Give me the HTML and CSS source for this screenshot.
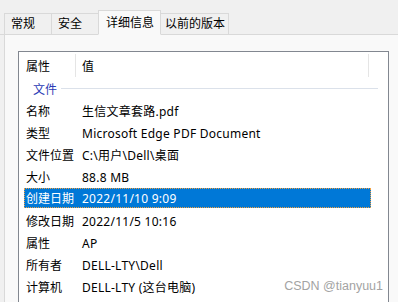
FILE: index.html
```html
<!DOCTYPE html>
<html lang="zh-CN">
<head>
    <meta charset="UTF-8">
    <title>详细信息</title>
    <link rel="stylesheet" href="styles.css">
</head>
<body>
    <div class="tabs">
        <div class="tab">常规</div>
        <div class="tab">安全</div>
        <div class="tab active">详细信息</div>
        <div class="tab">以前的版本</div>
    </div>

    <div class="panel">
        <div class="listbox">
            <div class="header">
                <div class="hcell name-col">属性</div>
                <div class="hcell value-col">值</div>
                <div class="hcell rest"></div>
            </div>

            <div class="group">
                <span class="group-title">文件</span>
                <span class="group-line"></span>
            </div>

            <div class="row"><span class="label">名称</span><span class="value">生信文章套路.pdf</span></div>
            <div class="row"><span class="label">类型</span><span class="value">Microsoft Edge PDF Document</span></div>
            <div class="row"><span class="label">文件位置</span><span class="value">C:\用户\Dell\桌面</span></div>
            <div class="row"><span class="label">大小</span><span class="value">88.8 MB</span></div>
            <div class="row selected"><span class="label">创建日期</span><span class="value">2022/11/10 9:09</span></div>
            <div class="row"><span class="label">修改日期</span><span class="value">2022/11/5 10:16</span></div>
            <div class="row"><span class="label">属性</span><span class="value">AP</span></div>
            <div class="row"><span class="label">所有者</span><span class="value">DELL-LTY\Dell</span></div>
            <div class="row"><span class="label">计算机</span><span class="value">DELL-LTY (这台电脑)</span></div>
        </div>
    </div>

    <div class="watermark">CSDN @tianyuu1</div>
</body>
</html>
```

FILE: styles.css
```css
/* Properties dialog, details tab */
* {
    box-sizing: border-box;
    margin: 0;
    padding: 0;
}

body {
    width: 398px;
    height: 302px;
    overflow: hidden;
    background-color: #f0f0f0;
    font-family: 'Noto Sans', 'Noto Sans CJK SC', sans-serif;
    font-size: 12px;
    color: #000;
    position: relative;
}

/* Tab strip */
.tabs {
    display: flex;
    align-items: flex-end;
    height: 35px;
    padding-left: 4px;
    border-bottom: 1px solid #d9d9d9;
}

.tab {
    height: 22px;
    margin-bottom: -1px;
    padding: 0 6px;
    display: flex;
    align-items: center;
    white-space: nowrap;
    border: 1px solid #d9d9d9;
    border-right: none;
    background-color: #f0f0f0;
    line-height: 1;
}

.tab:nth-child(1) { width: 47px; }
.tab:nth-child(2) { width: 47px; }
.tab:nth-child(4) { width: 69px; border-right: 1px solid #d9d9d9; }

.tab.active {
    width: 63px;
    height: 25px;
    padding-left: 7px;
    background-color: #f9f9f9;
    border-bottom-color: #f9f9f9;
    border-right: 1px solid #d9d9d9;
    margin-right: -1px;
    position: relative;
    z-index: 1;
}

.tab.active + .tab {
    border-left: none;
    padding: 0 0 0 5px;
}

/* Panel */
.panel {
    margin-left: 4px;
    height: 267px;
    padding: 16px 0 0 13px;
    background-color: #f9f9f9;
    border-left: 1px solid #d9d9d9;
}

.listbox {
    width: 371px;
    height: 260px;
    background-color: #fff;
    border: 1px solid #828790;
    border-bottom: none;
    padding-top: 1px;
}

.header {
    display: flex;
    height: 25px;
}

.hcell {
    display: flex;
    align-items: center;
    border-right: 1px solid #e5e5e5;
    margin: 1px 0 1px;
}

.name-col {
    width: 57px;
    padding-left: 7px;
}

.value-col {
    width: 293px;
    padding-left: 6px;
}

.rest {
    border-right: none;
}

/* Group header */
.group {
    display: flex;
    align-items: center;
    height: 22px;
    padding-left: 14px;
}

.group-title {
    color: #2a3bb5;
}

.group-line {
    width: 317px;
    height: 1px;
    margin-left: 4px;
    margin-top: -2px;
    background-color: #dbe1ea;
}

/* Property rows */
.row {
    display: flex;
    align-items: center;
    height: 22px;
    margin: 0 17px 0 5px;
    padding-left: 2px;
}

.label {
    width: 56px;
}

.value {
    letter-spacing: 0.25px;
}

.row.selected {
    height: 20px;
    margin-bottom: 2px;
    background-color: #0078d7;
    color: #fff;
    outline: 1px dotted #f0a040;
    outline-offset: -1px;
}

/* Watermark over the corner */
.watermark {
    position: absolute;
    right: 15px;
    bottom: 9px;
    font-family: 'Liberation Sans', Arial, sans-serif;
    font-size: 12.5px;
    color: #a3a3a3;
    text-shadow: 0 0 1px #fff;
}
```
